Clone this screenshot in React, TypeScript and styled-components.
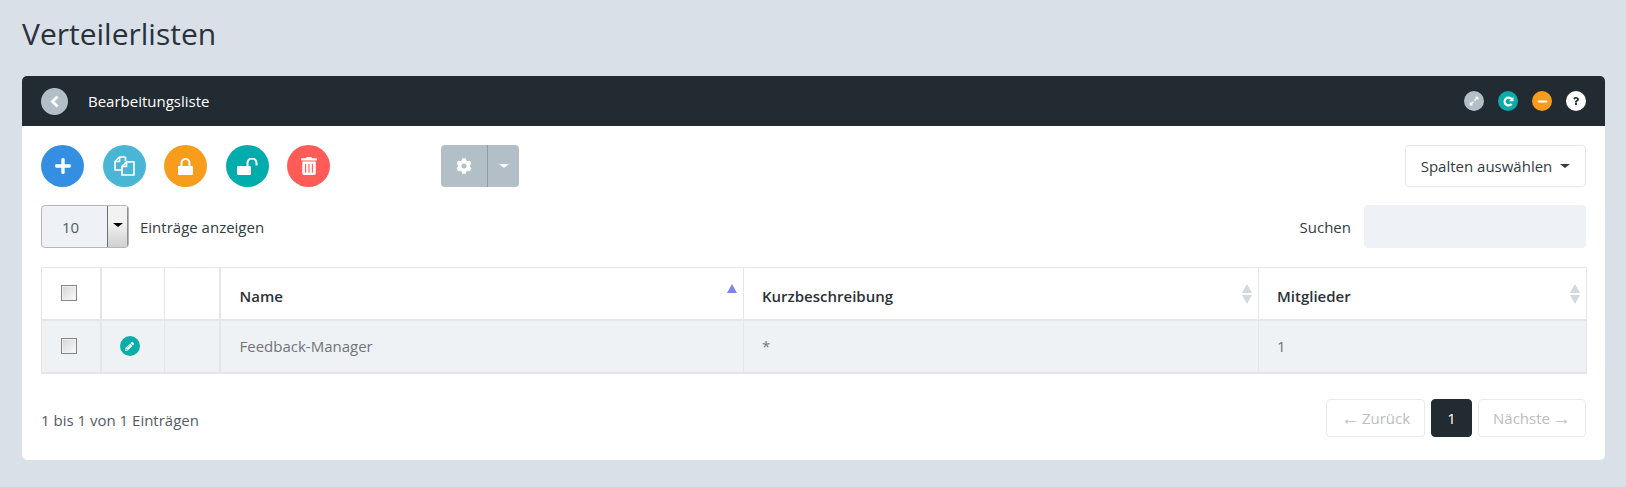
import React from "react";
import styled, { createGlobalStyle } from "styled-components";
import {
  FaCog,
  FaExpandAlt,
  FaMinus,
  FaPencilAlt,
  FaPlus,
  FaQuestion,
  FaTrashAlt,
} from "react-icons/fa";

const GlobalStyle = createGlobalStyle`
  html, body {
    margin: 0;
    background: #d9e0e8;
    font-family: "Open Sans", "Liberation Sans", sans-serif;
    color: #333b42;
  }
  * { box-sizing: border-box; }
`;

const Page = styled.div`
  width: 1626px;
  height: 487px;
  padding: 0 21px 0 22px;
  overflow: hidden;
`;

const PageTitle = styled.h1`
  margin: 0;
  height: 76px;
  padding-top: 13px;
  font-size: 30px;
  line-height: 42px;
  font-weight: 400;
  color: #2b3138;
`;

const Card = styled.div`
  background: #fff;
  border-radius: 5px;
  overflow: hidden;
  height: 384px;
`;

const CardHeader = styled.div`
  height: 50px;
  background: #222a32;
  display: flex;
  align-items: center;
  padding: 0 19px;
  color: #fff;
`;

const BackButton = styled.div`
  width: 27px;
  height: 27px;
  border-radius: 50%;
  background: #b3bfc7;
  display: flex;
  align-items: center;
  justify-content: center;
  margin-right: 20px;
`;

const CardTitle = styled.div`
  flex: 1;
  font-size: 15px;
  line-height: 20px;
`;

const HeaderTools = styled.div`
  display: flex;
  gap: 14px;
`;

const HeaderTool = styled.div<{ $bg: string; $fg?: string; $size?: number }>`
  width: 20px;
  height: 20px;
  border-radius: 50%;
  background: ${(p) => p.$bg};
  color: ${(p) => p.$fg || "#fff"};
  display: flex;
  align-items: center;
  justify-content: center;
  font-size: ${(p) => p.$size || 10}px;
`;

const CardBody = styled.div`
  padding: 19px 19px 0;
`;

const Toolbar = styled.div`
  display: flex;
  align-items: center;
  height: 42px;
`;

const RoundButtons = styled.div`
  display: flex;
  gap: 18.5px;
`;

const RoundButton = styled.div<{ $bg: string }>`
  width: 43px;
  height: 42px;
  border-radius: 50%;
  background: ${(p) => p.$bg};
  color: #fff;
  display: flex;
  align-items: center;
  justify-content: center;
  font-size: 18px;
`;

const SplitButton = styled.div`
  display: flex;
  height: 42px;
  width: 78px;
  margin-left: 111px;
  background: #b3bfc7;
  border-radius: 4px;
  color: #fff;
`;

const SplitMain = styled.div`
  width: 47px;
  display: flex;
  align-items: center;
  justify-content: center;
  font-size: 16px;
  border-right: 1px solid #919da5;
`;

const SplitCaret = styled.div`
  flex: 1;
  display: flex;
  align-items: center;
  justify-content: center;
`;

const Caret = styled.span<{ $color: string; $size: number }>`
  display: inline-block;
  width: 0;
  height: 0;
  border-style: solid;
  border-width: ${(p) => p.$size}px ${(p) => p.$size + 1}px 0;
  border-color: ${(p) => p.$color} transparent transparent;
`;

const ColumnsButton = styled.div`
  margin-left: auto;
  width: 181px;
  height: 42px;
  border: 1px solid #e3e7eb;
  border-radius: 4px;
  display: flex;
  align-items: center;
  justify-content: center;
  gap: 8px;
  font-size: 15px;
  color: #333b42;
`;

const FilterRow = styled.div`
  display: flex;
  align-items: center;
  margin-top: 18px;
  height: 43px;
  font-size: 15px;
`;

const LengthSelect = styled.div`
  width: 88px;
  height: 43px;
  border: 1px solid #b4b8bd;
  border-radius: 4px;
  background: #eef1f6;
  display: flex;
  overflow: hidden;
  margin-right: 11px;
`;

const LengthValue = styled.div`
  flex: 1;
  display: flex;
  align-items: center;
  justify-content: center;
  font-size: 15px;
  color: #555c63;
  padding-right: 8px;
`;

const LengthArrow = styled.div`
  width: 21px;
  border-left: 1px solid #707070;
  border-right: 1px solid #909090;
  background: linear-gradient(#f2f2f2 40%, #d0d0d0);
  display: flex;
  align-items: center;
  justify-content: center;
  padding-bottom: 4px;
`;

const SearchLabel = styled.div`
  margin-left: auto;
  margin-right: 13px;
`;

const SearchInput = styled.div`
  width: 222px;
  height: 43px;
  background: #eef1f6;
  border-radius: 4px;
`;

const Table = styled.table`
  width: 1545px;
  margin: 19px 0 0;
  table-layout: fixed;
  border-collapse: collapse;
  font-size: 15px;
  border: 1px solid #e3e7eb;
`;

const HeadCell = styled.th<{ $width: number; $thick?: boolean; $inset?: number }>`
  position: relative;
  width: ${(p) => p.$width}px;
  height: 52px;
  padding: 6px 18px 0 ${(p) => p.$inset || 18}px;
  text-align: left;
  font-weight: 600;
  color: #2b3138;
  border-right: ${(p) => (p.$thick ? 2 : 1)}px solid #e3e7eb;
  border-bottom: 2px solid #e3e7eb;
`;

const Row = styled.tr`
  background: #eff2f4;
`;

const Cell = styled.td<{ $thick?: boolean; $inset?: number }>`
  height: 53px;
  padding: 0 18px 0 ${(p) => p.$inset || 18}px;
  color: #6f757b;
  border-right: ${(p) => (p.$thick ? 2 : 1)}px solid #e3e7eb;
  border-bottom: 2px solid #e3e7eb;
`;

const CheckCell = styled(Cell)`
  padding: 0 0 0 19px;
`;

const EditCell = styled(Cell)`
  padding: 0 0 0 18px;
`;

const CheckHead = styled(HeadCell)`
  padding: 0 0 0 19px;
  vertical-align: middle;
`;

const CheckBox = styled.div`
  width: 16px;
  height: 16px;
  border: 1px solid #858585;
  background: linear-gradient(135deg, #d4d4d4, #fbfbfb);
  box-shadow: inset 0 0 0 1px #f2f2f2;
`;

const EditButton = styled.div`
  width: 20px;
  height: 20px;
  border-radius: 50%;
  background: #0cada8;
  color: #fff;
  display: flex;
  align-items: center;
  justify-content: center;
  font-size: 9px;
`;

const SortArrows = styled.div`
  position: absolute;
  right: 6px;
  top: 16px;
  display: flex;
  flex-direction: column;
  gap: 2px;
`;

const ArrowUp = styled.span<{ $color: string }>`
  width: 0;
  height: 0;
  border-style: solid;
  border-width: 0 5px 9px;
  border-color: transparent transparent ${(p) => p.$color};
`;

const ArrowDown = styled.span<{ $color: string }>`
  width: 0;
  height: 0;
  border-style: solid;
  border-width: 9px 5px 0;
  border-color: ${(p) => p.$color} transparent transparent;
`;

const Footer = styled.div`
  display: flex;
  align-items: center;
  justify-content: space-between;
  margin-top: 25px;
  font-size: 15px;
  color: #555c63;
`;

const FooterInfo = styled.div`
  padding-top: 4px;
`;

const Pager = styled.div`
  display: flex;
  gap: 6px;
`;

const PageButton = styled.div<{ $width: number; $active?: boolean }>`
  width: ${(p) => p.$width}px;
  height: 38px;
  padding-top: 1px;
  border-radius: 4px;
  border: 1px solid ${(p) => (p.$active ? "#222a32" : "#e8ebee")};
  background: ${(p) => (p.$active ? "#222a32" : "#fff")};
  color: ${(p) => (p.$active ? "#fff" : "#b9bdc1")};
  display: flex;
  align-items: center;
  justify-content: center;
  gap: 2px;
  font-size: 15px;
`;

const PagerArrow = styled.span`
  font-family: "Liberation Sans", sans-serif;
  font-size: 19px;
  line-height: 1;
`;

const BackIcon = () => (
  <svg width="9" height="13" viewBox="0 0 9 13" fill="none" stroke="#fff" strokeWidth="2.8">
    <path d="M7.5 1.5L2.5 6.5L7.5 11.5" />
  </svg>
);

const RefreshIcon = () => (
  <svg width="11" height="11" viewBox="0 0 11 11">
    <path d="M8.6 3.2A3.9 3.9 0 1 0 8.6 7.8" fill="none" stroke="#fff" strokeWidth="2.1" />
    <polygon points="10.5,0.8 10.5,5.2 6.1,5.2" fill="#fff" />
  </svg>
);

const FilesIcon = () => (
  <svg width="21" height="20" viewBox="0 0 21 20" fill="none" stroke="#fff" strokeWidth="1.7" strokeLinejoin="round">
    <path d="M11.5 1H5.5L1 5.5V14H7" />
    <path d="M5.5 1V5.5H1" />
    <path d="M11.5 1V5" />
    <path d="M12.5 5.8H20V19H8V10.3Z" />
    <path d="M12.5 5.8V10.3H8" />
  </svg>
);

const LockIcon = () => (
  <svg width="15" height="17" viewBox="0 0 15 17">
    <rect x="0" y="8" width="15" height="9" rx="1" fill="#fff" />
    <path d="M3.5 8V5a4 4 0 0 1 8 0v3" fill="none" stroke="#fff" strokeWidth="2" />
  </svg>
);

const UnlockIcon = () => (
  <svg width="21" height="17" viewBox="0 0 21 17">
    <rect x="0" y="8" width="14" height="9" rx="1" fill="#fff" />
    <path d="M10.5 8V5a4.5 4.5 0 0 1 9 0v2.5" fill="none" stroke="#fff" strokeWidth="2" />
  </svg>
);

const SortHead = ({ width, label, active, inset }: { width: number; label: string; active?: boolean; inset?: number }) => (
  <HeadCell $width={width} $inset={inset}>
    {label}
    <SortArrows>
      <ArrowUp $color={active ? "#7f86e0" : "#d3d8dc"} />
      {active ? null : <ArrowDown $color="#d3d8dc" />}
    </SortArrows>
  </HeadCell>
);

export default function App() {
  return (
    <Page>
      <GlobalStyle />
      <PageTitle>Verteilerlisten</PageTitle>
      <Card>
        <CardHeader>
          <BackButton>
            <BackIcon />
          </BackButton>
          <CardTitle>Bearbeitungsliste</CardTitle>
          <HeaderTools>
            <HeaderTool $bg="#b3bfc7">
              <FaExpandAlt />
            </HeaderTool>
            <HeaderTool $bg="#0cada8">
              <RefreshIcon />
            </HeaderTool>
            <HeaderTool $bg="#f89c1c" $size={11}>
              <FaMinus />
            </HeaderTool>
            <HeaderTool $bg="#fff" $fg="#222a32" $size={8}>
              <FaQuestion />
            </HeaderTool>
          </HeaderTools>
        </CardHeader>
        <CardBody>
          <Toolbar>
            <RoundButtons>
              <RoundButton $bg="#348fe2">
                <FaPlus />
              </RoundButton>
              <RoundButton $bg="#49b6d6">
                <FilesIcon />
              </RoundButton>
              <RoundButton $bg="#f89c1c">
                <LockIcon />
              </RoundButton>
              <RoundButton $bg="#00acac">
                <UnlockIcon />
              </RoundButton>
              <RoundButton $bg="#ff5b57">
                <FaTrashAlt />
              </RoundButton>
            </RoundButtons>
            <SplitButton>
              <SplitMain>
                <FaCog />
              </SplitMain>
              <SplitCaret>
                <Caret $color="#fff" $size={4} />
              </SplitCaret>
            </SplitButton>
            <ColumnsButton>
              Spalten auswählen
              <Caret $color="#333b42" $size={4} />
            </ColumnsButton>
          </Toolbar>
          <FilterRow>
            <LengthSelect>
              <LengthValue>10</LengthValue>
              <LengthArrow>
                <Caret $color="#000" $size={4} />
              </LengthArrow>
            </LengthSelect>
            Einträge anzeigen
            <SearchLabel>Suchen</SearchLabel>
            <SearchInput />
          </FilterRow>
          <Table>
            <thead>
              <tr>
                <CheckHead $width={59} $thick>
                  <CheckBox />
                </CheckHead>
                <HeadCell $width={64} />
                <HeadCell $width={55} $thick />
                <SortHead width={524} label="Name" active inset={19} />
                <SortHead width={515} label="Kurzbeschreibung" />
                <SortHead width={328} label="Mitglieder" />
              </tr>
            </thead>
            <tbody>
              <Row>
                <CheckCell $thick>
                  <CheckBox />
                </CheckCell>
                <EditCell>
                  <EditButton>
                    <FaPencilAlt />
                  </EditButton>
                </EditCell>
                <Cell $thick />
                <Cell $inset={19}>Feedback-Manager</Cell>
                <Cell>*</Cell>
                <Cell>1</Cell>
              </Row>
            </tbody>
          </Table>
          <Footer>
            <FooterInfo>1 bis 1 von 1 Einträgen</FooterInfo>
            <Pager>
              <PageButton $width={99}>
                <PagerArrow>←</PagerArrow> Zurück
              </PageButton>
              <PageButton $width={41} $active>
                1
              </PageButton>
              <PageButton $width={108}>
                Nächste <PagerArrow>→</PagerArrow>
              </PageButton>
            </Pager>
          </Footer>
        </CardBody>
      </Card>
    </Page>
  );
}
